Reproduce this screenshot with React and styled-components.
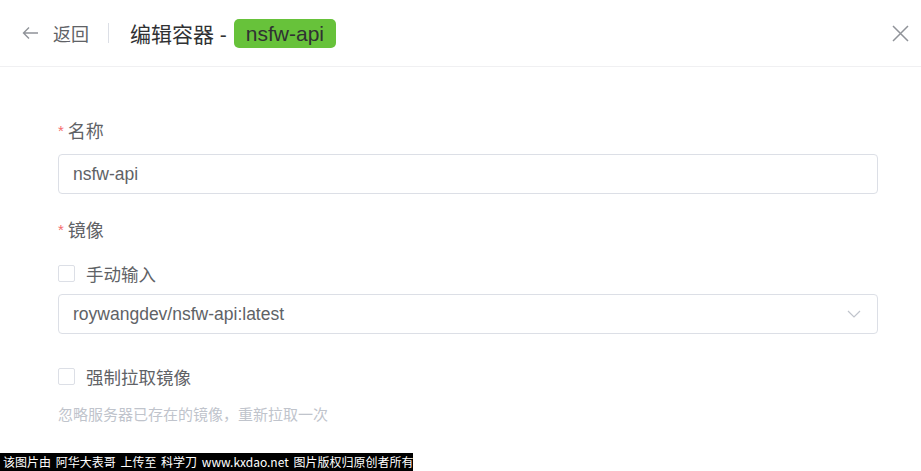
import React from "react";
import styled, { createGlobalStyle } from "styled-components";

const Global = createGlobalStyle`
  html, body {
    margin: 0;
    padding: 0;
    background: #ffffff;
    font-family: "Liberation Sans", "Noto Sans CJK SC", sans-serif;
  }
`;

const Page = styled.div`
  width: 921px;
  height: 471px;
  position: relative;
  overflow: hidden;
  background: #fff;
`;

const Header = styled.header`
  height: 66px;
  display: flex;
  align-items: center;
  padding: 0 8px 0 22px;
  border-bottom: 1px solid #f0f0f2;
`;

const Back = styled.div`
  display: flex;
  align-items: center;
  gap: 14px;
  color: #909399;
  padding-right: 19px;
  border-right: 1px solid #dcdfe6;
  height: 20px;
`;

const BackText = styled.span`
  color: #606266;
  font-size: 18px;
`;

const Title = styled.div`
  display: flex;
  align-items: center;
  gap: 7px;
  margin-left: 21px;
  color: #303133;
  font-size: 21px;
  flex: 1;
`;

const Tag = styled.span`
  background: #67c23a;
  color: #303133;
  border-radius: 5px;
  padding: 0 12px;
  height: 29px;
  line-height: 29px;
  font-size: 21px;
  display: inline-flex;
  align-items: center;
`;

const Close = styled.button`
  border: 0;
  background: transparent;
  padding: 0;
  width: 26px;
  height: 26px;
  display: flex;
  align-items: center;
  justify-content: center;
  color: #909399;
`;

const Form = styled.div`
  padding: 51px 43px 0 58px;
  display: flex;
  flex-direction: column;
`;

const Label = styled.div`
  display: flex;
  align-items: center;
  height: 24px;
  font-size: 18px;
  color: #606266;
  margin-bottom: ${(p) => p.$mb || 12}px;
`;

const Required = styled.span`
  color: #f56c6c;
  margin-right: 4px;
  font-size: 15px;
  line-height: 1;
`;

const Field = styled.div`
  height: 40px;
  box-sizing: border-box;
  border: 1px solid #dcdfe6;
  border-radius: 4px;
  display: flex;
  align-items: center;
  justify-content: space-between;
  padding: 0 16px 0 14px;
  font-size: 17.5px;
  color: #606266;
  margin-bottom: ${(p) => p.$mb || 0}px;
`;

const CheckRow = styled.label`
  display: flex;
  align-items: center;
  gap: 11px;
  height: 24px;
  font-size: 17.5px;
  color: #606266;
  margin-bottom: ${(p) => p.$mb || 0}px;
`;

const Box = styled.span`
  width: 15px;
  height: 15px;
  border: 1px solid #dcdfe6;
  border-radius: 2px;
  background: #fff;
`;

const Hint = styled.div`
  font-size: 15px;
  line-height: 20px;
  color: #c0c4cc;
`;

const Watermark = styled.div`
  position: absolute;
  left: 0;
  bottom: 0;
  width: 413px;
  height: 18px;
  background: #000;
  color: #fff;
  font-size: 12px;
  line-height: 18px;
  padding-left: 3px;
  box-sizing: border-box;
  white-space: nowrap;
  word-spacing: 2px;
  font-family: "Noto Sans CJK SC", sans-serif;
`;

const ArrowLeft = () => (
  <svg width="17" height="14" viewBox="0 0 17 14" fill="none" stroke="currentColor" strokeWidth="1.4">
    <path d="M16 7H1.5M7 1.5L1.5 7L7 12.5" />
  </svg>
);

const CloseIcon = () => (
  <svg width="17" height="17" viewBox="0 0 17 17" stroke="currentColor" strokeWidth="1.5">
    <path d="M1 1L16 16M16 1L1 16" />
  </svg>
);

const Chevron = () => (
  <svg width="14" height="8" viewBox="0 0 14 8" fill="none" stroke="#c0c4cc" strokeWidth="1.2">
    <path d="M1 1L7 7L13 1" />
  </svg>
);

export default function App() {
  return (
    <Page>
      <Global />
      <Header>
        <Back>
          <ArrowLeft />
          <BackText>返回</BackText>
        </Back>
        <Title>
          编辑容器 -<Tag>nsfw-api</Tag>
        </Title>
        <Close aria-label="close">
          <CloseIcon />
        </Close>
      </Header>
      <Form>
        <Label>
          <Required>*</Required>名称
        </Label>
        <Field $mb={23}>nsfw-api</Field>
        <Label $mb={20}>
          <Required>*</Required>镜像
        </Label>
        <CheckRow $mb={9}>
          <Box />
          手动输入
        </CheckRow>
        <Field $mb={30}>
          roywangdev/nsfw-api:latest
          <Chevron />
        </Field>
        <CheckRow $mb={17}>
          <Box />
          强制拉取镜像
        </CheckRow>
        <Hint>忽略服务器已存在的镜像，重新拉取一次</Hint>
      </Form>
      <Watermark>该图片由 阿华大表哥 上传至 科学刀 www.kxdao.net 图片版权归原创者所有</Watermark>
    </Page>
  );
}
